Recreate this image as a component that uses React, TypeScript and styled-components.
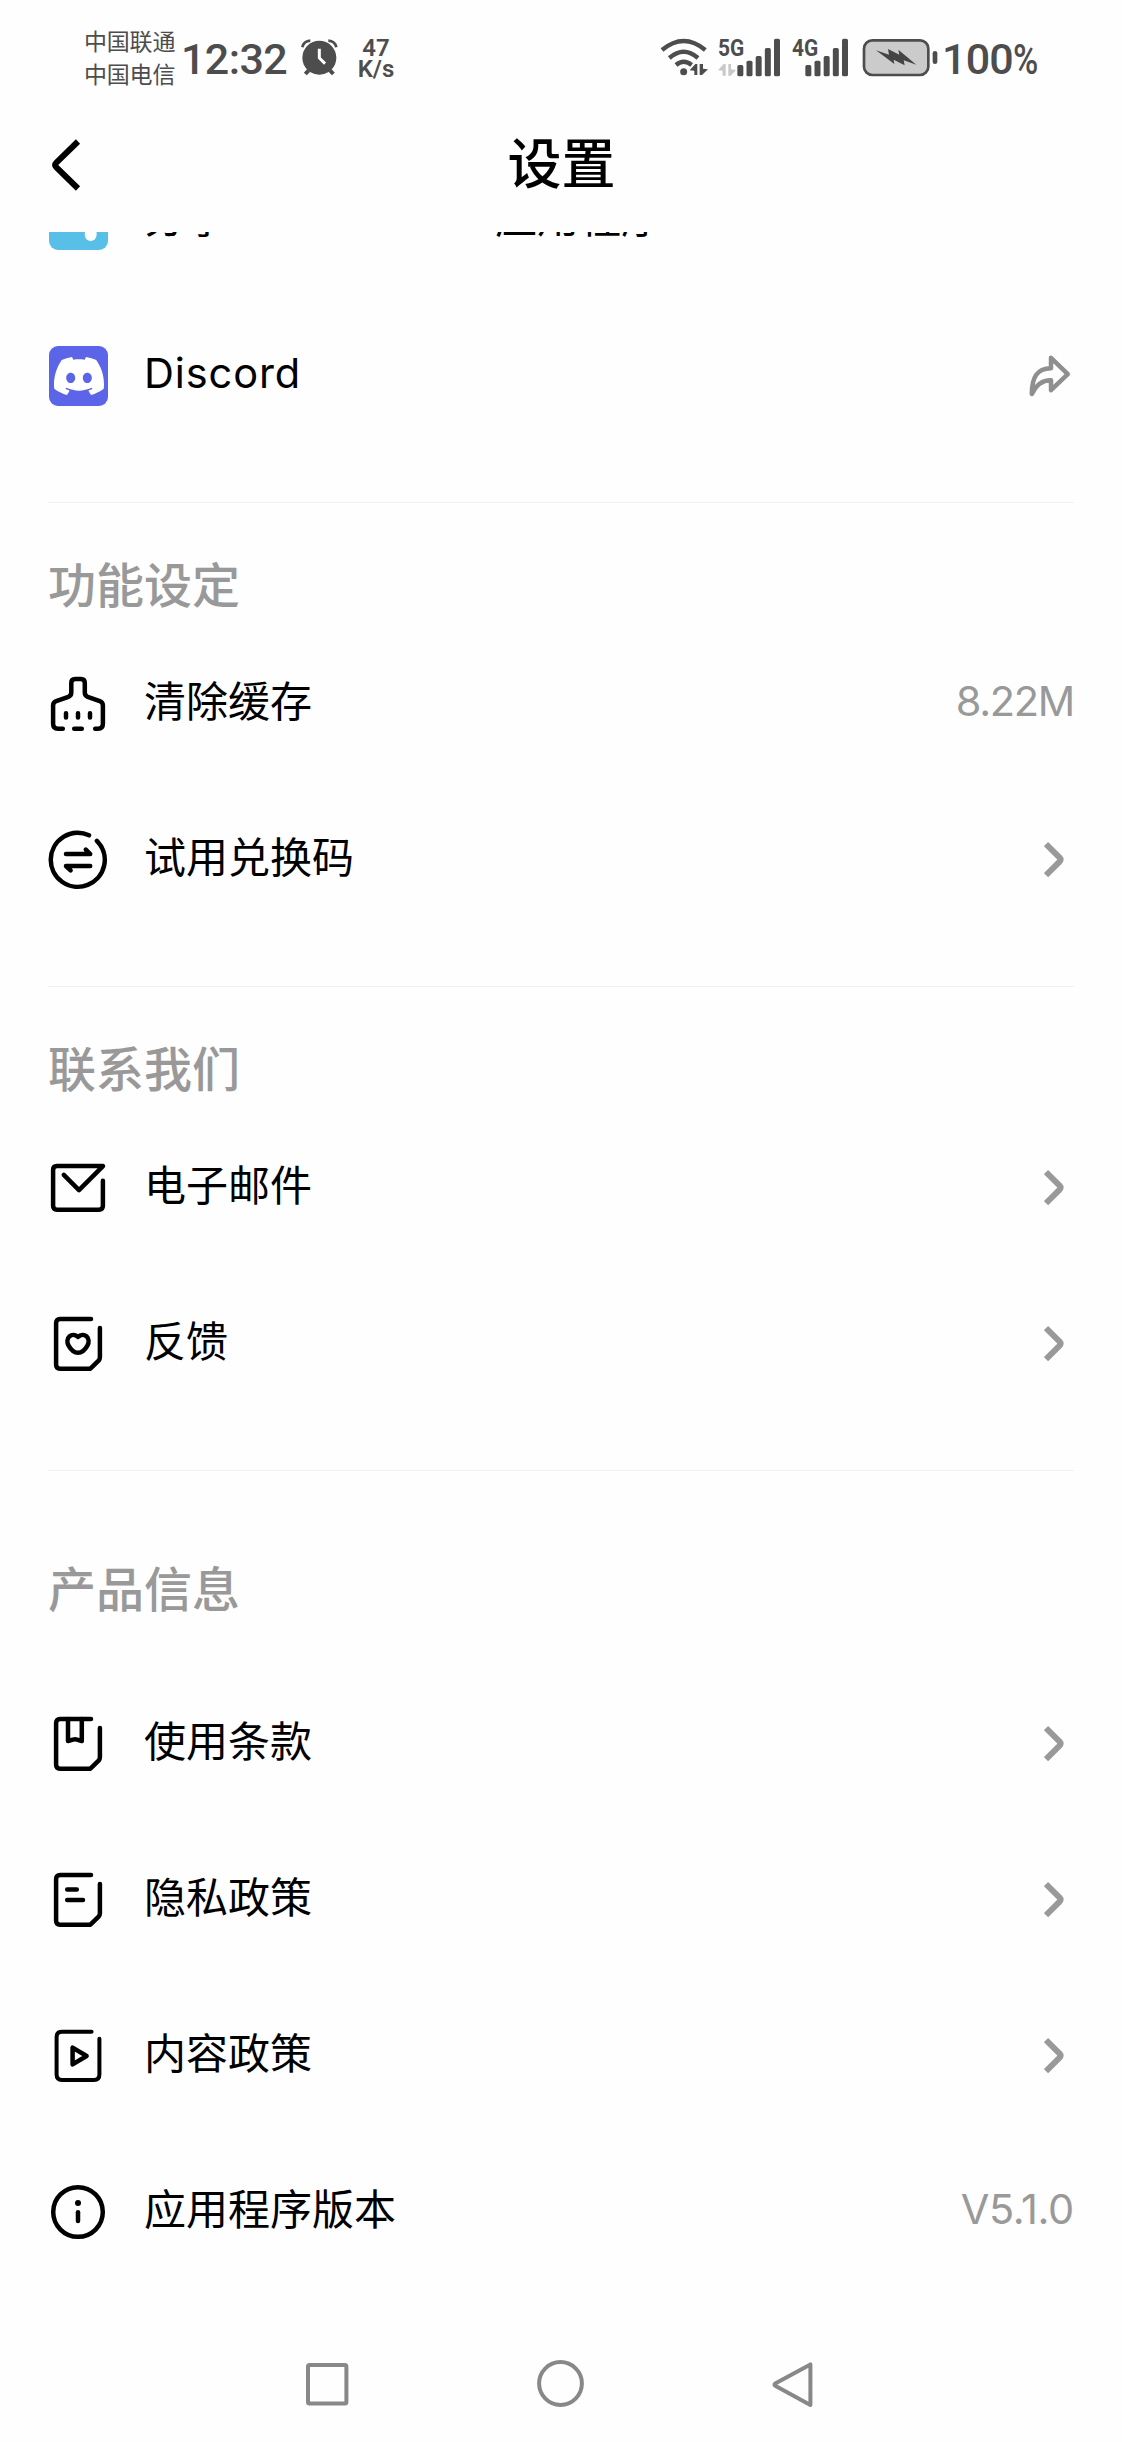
import React from "react";
import styled, { createGlobalStyle } from "styled-components";
import { SiDiscord } from "react-icons/si";

const GlobalStyle = createGlobalStyle`
  * { box-sizing: border-box; }
  body { margin: 0; background: #fefefe; }
`;

const INK = "#4d4d4d";

const Screen = styled.div`
  width: 1122px;
  height: 2442px;
  display: flex;
  flex-direction: column;
  overflow: hidden;
  background: #fefefe;
  color: #000;
  font-family: Inter, "Noto Sans CJK SC", sans-serif;
`;

const StatusBar = styled.div`
  height: 117px;
  flex: none;
  display: flex;
  align-items: flex-start;
  justify-content: space-between;
  padding: 25px 84px 0 84px;
  color: ${INK};
  font-family: Roboto, "Noto Sans CJK SC", sans-serif;
`;

const StatusGroup = styled.div`
  display: flex;
  align-items: flex-start;
`;

const Carriers = styled.div`
  width: 97px;
  padding-top: 1px;
  font-size: 23px;
  line-height: 33px;
  letter-spacing: -0.2px;
  white-space: nowrap;
`;

const BigText = styled.div<{ $width: number; $spacing?: number; $left?: number }>`
  width: ${(p) => p.$width}px;
  margin-left: ${(p) => p.$left ?? 0}px;
  font-size: 43px;
  font-weight: 500;
  line-height: 68px;
  letter-spacing: ${(p) => p.$spacing ?? 0}px;
  white-space: nowrap;
`;

const Percent = styled.span`
  display: inline-block;
  transform: scaleX(0.8);
  transform-origin: left;
`;

const StatusGlyph = styled.svg<{ $top: number; $left?: number }>`
  display: block;
  flex: none;
  margin-top: ${(p) => p.$top}px;
  margin-left: ${(p) => p.$left ?? 0}px;
`;

const Speed = styled.div`
  display: flex;
  flex-direction: column;
  align-items: center;
  margin: 13px 0 0 20px;
  width: 36px;
  font-size: 24px;
  font-weight: 600;
  line-height: 20.5px;
`;

const Signal = styled.div<{ $width: number; $left: number }>`
  position: relative;
  width: ${(p) => p.$width}px;
  margin-left: ${(p) => p.$left}px;
`;

const NetLabel = styled.span`
  position: absolute;
  top: 8px;
  left: 0;
  font-size: 24px;
  font-weight: 700;
  line-height: 30px;
  transform: scaleX(0.87);
  transform-origin: left;
`;

const Header = styled.header`
  height: 115px;
  flex: none;
  display: grid;
  grid-template-columns: 100px 1fr 100px;
  align-items: center;
  padding-bottom: 19px;
`;

const BackButton = styled.button`
  border: 0;
  padding: 0 0 0 49px;
  background: none;
  display: flex;
`;

const Title = styled.h1`
  margin: 0;
  padding-left: 1px;
  text-align: center;
  font-size: 54px;
  font-weight: 500;
  line-height: 96px;
`;

const Scroller = styled.main`
  flex: 1;
  overflow: hidden;
  padding: 0 48px;
`;

const List = styled.div`
  margin-top: -90px;
`;

const Section = styled.section`
  padding-bottom: 48px;
  & + & {
    border-top: 1px solid #f1f1f1;
  }
`;

const SectionTitle = styled.h2<{ $tall?: boolean }>`
  margin: 0;
  height: ${(p) => (p.$tall ? 195 : 123)}px;
  padding-top: ${(p) => (p.$tall ? 84 : 48)}px;
  font-size: 48px;
  line-height: 70px;
  font-weight: 500;
  color: #999;
`;

const Row = styled.div`
  height: 156px;
  display: flex;
  align-items: center;
`;

const Label = styled.div`
  flex: 1;
  display: flex;
  margin-left: 36px;
  padding-bottom: 4px;
  font-size: 42px;
  line-height: 62px;
  white-space: nowrap;
`;

const LatinLabel = styled.span`
  padding-bottom: 3px;
  font-size: 41.5px;
  letter-spacing: 0.9px;
`;

const LabelTail = styled.span`
  margin-left: 267px;
`;

const Value = styled.div<{ $spacing: number }>`
  padding-bottom: 7px;
  font-size: 41.5px;
  font-weight: 400;
  line-height: 62px;
  letter-spacing: ${(p) => p.$spacing}px;
  color: #999;
`;

const Tile = styled.div<{ $color: string }>`
  width: 59px;
  height: 60px;
  margin-left: 1px;
  border-radius: 9px;
  background: ${(p) => p.$color};
  display: flex;
  align-items: center;
  justify-content: center;
  color: #fff;
`;

const LineSvg = styled.svg`
  display: block;
  flex: none;
  fill: none;
  stroke: #000;
  stroke-width: 4.5;
  stroke-linecap: round;
  stroke-linejoin: round;
`;

const GreySvg = styled.svg<{ $stroke: number; $color: string }>`
  display: block;
  flex: none;
  fill: none;
  stroke: ${(p) => p.$color};
  stroke-width: ${(p) => p.$stroke};
`;

const NavBar = styled.nav`
  height: 117px;
  flex: none;
  display: flex;
  justify-content: space-between;
  align-items: center;
  padding: 0 302px;
`;

const LineIcon = ({ children }: { children: React.ReactNode }) => (
  <LineSvg width="60" height="60" viewBox="0 0 60 60">
    {children}
  </LineSvg>
);

const BroomIcon = () => (
  <LineIcon>
    <path d="M14.8 54.7H10Q5.1 54.7 5.1 49.8V31.5Q5.1 28.3 8.2 27.2L20.4 22.9Q23.3 21.7 23.3 18.6V9Q23.3 5.1 27.2 5.1H32.9Q36.8 5.1 36.8 9V18.6Q36.8 21.7 39.7 22.9L51.8 27.2Q54.9 28.3 54.9 31.5V49.8Q54.9 54.7 50 54.7H47.2" />
    <path d="M26.2 54.7H33.8M18 39.2V43.6M30 39.2V43.6M42 39.2V43.6" />
  </LineIcon>
);

const ExchangeIcon = () => (
  <LineIcon>
    <path d="M48.9 10.8A27 27 0 1 1 41 5.3" />
    <path d="M18 24H42.2L37.8 19.6M42.2 36H18L22.6 40.4" />
  </LineIcon>
);

const MailIcon = () => (
  <LineIcon>
    <path d="M15.8 16.8L31 32.2L55 8.1H9Q5.1 8.1 5.1 12V47.8Q5.1 51.7 9 51.7H51Q54.9 51.7 54.9 47.8V22.8" />
  </LineIcon>
);

const sheet = "M43 5.1H12Q8.1 5.1 8.1 9V50.8Q8.1 54.7 12 54.7H42.4L50.6 46.6Q51.9 45.2 51.9 43.2V14";

const FeedbackIcon = () => (
  <LineIcon>
    <path d={sheet} />
    <path d="M30 23C27.4 20.4 23.8 20.4 21.6 22.2C19 24.6 18.8 28.4 20.6 31.6C22.4 34.8 26.2 38.8 30 38.8C33.8 38.8 37.6 34.8 39.4 31.6C41.2 28.4 41 24.6 38.4 22.2C36.2 20.4 32.6 20.4 30 23Z" />
  </LineIcon>
);

const TermsIcon = () => (
  <LineIcon>
    <path d={sheet} />
    <path d="M20 5.1V27L25 25.6Q27 25 29 25.6L33.8 27V5.1" />
  </LineIcon>
);

const PrivacyIcon = () => (
  <LineIcon>
    <path d={sheet} />
    <path d="M19.2 19.4H28.8M19.2 30.1H35" />
  </LineIcon>
);

const ContentIcon = () => (
  <LineIcon>
    <path d="M43.6 5.7H14Q8.6 5.7 8.6 11V48.6Q8.6 54 14 54H46Q51.4 54 51.4 48.6V12.8" strokeWidth="4" />
    <path d="M24.6 21.6V38.4L38.6 30Z" />
  </LineIcon>
);

const InfoIcon = () => (
  <LineIcon>
    <circle cx="30" cy="30" r="24.8" />
    <path d="M30 30.2V39" />
    <circle cx="30" cy="21" r="3" fill="#000" stroke="none" />
  </LineIcon>
);

const Chevron = () => (
  <GreySvg width="30" height="60" viewBox="0 0 30 60" $stroke={6} $color="#999">
    <path d="M2 14L15.6 27.6Q17.4 29.6 15.6 31.6L2 45.2" />
  </GreySvg>
);

const ForwardIcon = () => (
  <GreySvg width="48" height="60" viewBox="0 0 48 60" $stroke={4.5} $color="#8f8f8f">
    <path
      d="M25 11.8L41.8 28.2L25 44.2V34.2C16 34 9.8 39.6 5.8 47.9C6 31.5 10.6 22.6 25 22.3Z"
      strokeLinejoin="round"
    />
  </GreySvg>
);

const ShareTile = () => (
  <Tile $color="#58bfe6">
    <svg width="59" height="60" viewBox="0 0 59 60">
      <rect x="35.8" y="26" width="11.8" height="25" rx="5.9" fill="#fff" />
    </svg>
  </Tile>
);

const AlarmIcon = () => (
  <StatusGlyph $top={14} $left={3} width="37" height="37" viewBox="725 88 111 111">
    <circle cx="780" cy="144" r="51" fill={INK} />
    <path d="M748 182L738 193M812 182L822 193" stroke={INK} strokeWidth="12" />
    <path
      d="M729 113Q733 94 753 93M831 113Q827 94 807 93"
      fill="none"
      stroke={INK}
      strokeWidth="8"
    />
    <path d="M780 117V145L797 162" fill="none" stroke="#fefefe" strokeWidth="9" />
  </StatusGlyph>
);

const WifiIcon = () => (
  <StatusGlyph $top={12} width="49" height="41" viewBox="58 81 147 123">
    <g fill="none" stroke={INK} strokeWidth="13">
      <path d="M64 120Q129 66 194 120" />
      <path d="M86 144Q129 107 172 144" />
      <path d="M106 165Q129 146 153 165" />
    </g>
    <circle cx="129" cy="185" r="10.5" fill={INK} />
    <path d="M147 181L164 162H170V195H161V182ZM177 162H187V176L202 178L184 195H177Z" fill={INK} />
  </StatusGlyph>
);

const bars = [
  { x: 0, top: 165 },
  { x: 27.5, top: 152 },
  { x: 55, top: 138 },
  { x: 82.5, top: 114 },
  { x: 110, top: 86 },
];

const SignalBars = ({ offset, data }: { offset: number; data?: boolean }) => (
  <StatusGlyph $top={12} width="62" height="41" viewBox="0 81 186 123">
    {bars.map((b) => (
      <rect key={b.x} x={b.x + offset} y={b.top} width="18" height={199 - b.top} rx="5" fill={INK} />
    ))}
    {data && (
      <path d="M0 181L17 162H23V197H14V182ZM31 162H39V178L54 180L38 197H31Z" fill="#c8c8c8" />
    )}
  </StatusGlyph>
);

const BatteryIcon = () => (
  <StatusGlyph $top={12} $left={12.5} width="76" height="41" viewBox="665 81 228 123">
    <rect x="671" y="91" width="193" height="104" rx="25" fill="#cbcbcb" stroke={INK} strokeWidth="8" />
    <rect x="877" y="123" width="14" height="39" rx="7" fill={INK} />
    <path d="M707 121L746 134L743 117L777 134L774 119L828 164L790 151L793 166L760 149L762 162Z" fill="#444" />
  </StatusGlyph>
);

type Item = {
  icon: React.ReactNode;
  label: React.ReactNode;
  value?: string;
  valueSpacing?: number;
  action?: React.ReactNode;
};
type Group = { title?: string; tall?: boolean; items: Item[] };

const groups: Group[] = [
  {
    items: [
      {
        icon: <ShareTile />,
        label: (
          <>
            分享<LabelTail>应用程序</LabelTail>
          </>
        ),
        action: null,
      },
      {
        icon: (
          <Tile $color="#5c64e8">
            <SiDiscord size={50} />
          </Tile>
        ),
        label: <LatinLabel>Discord</LatinLabel>,
        action: <ForwardIcon />,
      },
    ],
  },
  {
    title: "功能设定",
    items: [
      { icon: <BroomIcon />, label: "清除缓存", value: "8.22M", valueSpacing: -1.3 },
      { icon: <ExchangeIcon />, label: "试用兑换码" },
    ],
  },
  {
    title: "联系我们",
    items: [
      { icon: <MailIcon />, label: "电子邮件" },
      { icon: <FeedbackIcon />, label: "反馈" },
    ],
  },
  {
    title: "产品信息",
    tall: true,
    items: [
      { icon: <TermsIcon />, label: "使用条款" },
      { icon: <PrivacyIcon />, label: "隐私政策" },
      { icon: <ContentIcon />, label: "内容政策" },
      { icon: <InfoIcon />, label: "应用程序版本", value: "V5.1.0", valueSpacing: -0.3 },
    ],
  },
];

const Trailing = ({ item }: { item: Item }) => {
  if (item.value) return <Value $spacing={item.valueSpacing ?? 0}>{item.value}</Value>;
  if (item.action !== undefined) return <>{item.action}</>;
  return <Chevron />;
};

export default function App() {
  return (
    <Screen>
      <GlobalStyle />
      <StatusBar>
        <StatusGroup>
          <Carriers>
            中国联通
            <br />
            中国电信
          </Carriers>
          <BigText $width={117} $spacing={-0.6}>
            12:32
          </BigText>
          <AlarmIcon />
          <Speed>
            <span>47</span>
            <span>K/s</span>
          </Speed>
        </StatusGroup>
        <StatusGroup>
          <WifiIcon />
          <Signal $width={62} $left={9}>
            <NetLabel>5G</NetLabel>
            <SignalBars offset={58} data />
          </Signal>
          <Signal $width={58} $left={12}>
            <NetLabel>4G</NetLabel>
            <SignalBars offset={40} />
          </Signal>
          <BatteryIcon />
          <BigText $width={96} $left={4} $spacing={-0.8}>
            100<Percent>%</Percent>
          </BigText>
        </StatusGroup>
      </StatusBar>
      <Header>
        <BackButton aria-label="返回">
          <GreySvg width="34" height="56" viewBox="0 0 34 56" $stroke={6} $color="#000">
            <path d="M29 4.5L7.4 25.5Q5 28 7.4 30.5L29 51.5" />
          </GreySvg>
        </BackButton>
        <Title>设置</Title>
      </Header>
      <Scroller>
        <List>
          {groups.map((g, i) => (
            <Section key={i}>
              {g.title && <SectionTitle $tall={g.tall}>{g.title}</SectionTitle>}
              {g.items.map((item, j) => (
                <Row key={j}>
                  {item.icon}
                  <Label>{item.label}</Label>
                  <Trailing item={item} />
                </Row>
              ))}
            </Section>
          ))}
        </List>
      </Scroller>
      <NavBar>
        <GreySvg width="50" height="50" viewBox="0 0 50 50" $stroke={4} $color="#888">
          <rect x="6" y="6" width="38.4" height="38.4" rx="1.5" />
        </GreySvg>
        <GreySvg width="50" height="50" viewBox="0 0 50 50" $stroke={4} $color="#888">
          <circle cx="24.5" cy="24.5" r="21.4" />
        </GreySvg>
        <GreySvg width="50" height="50" viewBox="0 0 50 50" $stroke={4} $color="#888">
          <path d="M40.4 5.4V46L5.2 26.8Q3.8 25.7 5.2 24.6Z" strokeLinejoin="round" />
        </GreySvg>
      </NavBar>
    </Screen>
  );
}
